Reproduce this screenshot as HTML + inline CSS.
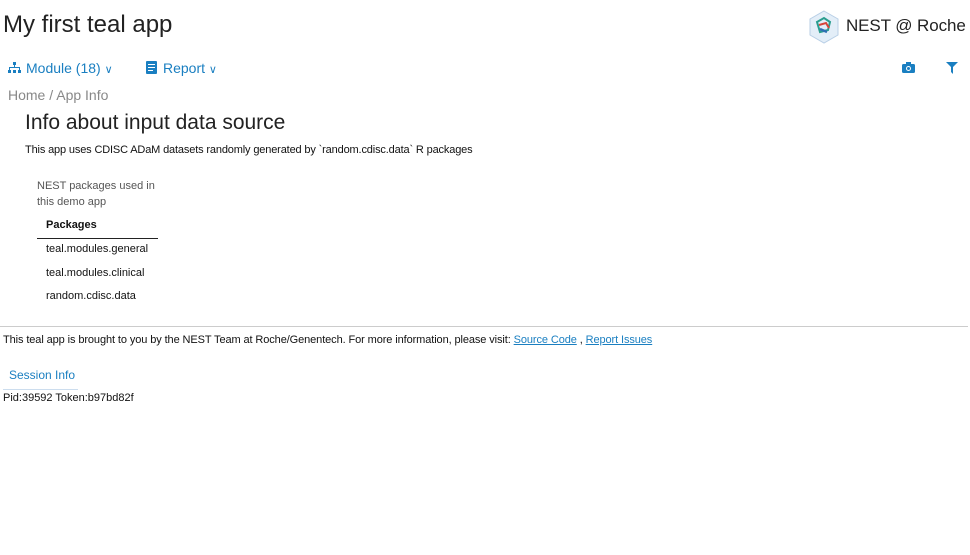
<!DOCTYPE html>
<html><head><meta charset="utf-8"><style>
body{margin:0;width:970px;height:555px;background:#fff;font-family:"Liberation Sans",sans-serif;color:#111;position:relative;overflow:hidden}
.a{position:absolute;white-space:nowrap}
.blue{color:#1a7fc1}
a{color:#1a7fc1;text-decoration:underline}
</style></head><body>
<div class="a" style="left:3px;top:11px;font-size:24px;color:#222">My first teal app</div>
<svg class="a" style="left:808px;top:10px" width="32" height="34" viewBox="0 0 32 34"><polygon points="16,1 30,9 30,25 16,33 2,25 2,9" fill="#e3eef8" stroke="#b8cfe6"/><path d="M9 12 L16 8 L22 12 L20 20 L12 22 Z" fill="none" stroke="#2a9d8f" stroke-width="2"/><path d="M11 15 L18 13 L21 18" stroke="#d6453a" stroke-width="2" fill="none"/><path d="M12 19 L19 22" stroke="#2f6fb3" stroke-width="2.5"/></svg>
<div class="a" style="left:846px;top:16px;font-size:17px;color:#222;letter-spacing:-0.1px">NEST @ Roche</div>
<svg class="a" style="left:8px;top:62px" width="13" height="12" viewBox="0 0 13 12" fill="#1a7fc1"><rect x="5" y="0" width="3" height="3"/><rect x="6" y="3" width="1" height="3"/><rect x="1" y="5" width="11" height="1"/><rect x="1" y="5" width="1" height="3"/><rect x="11" y="5" width="1" height="3"/><rect x="0" y="8" width="3" height="3"/><rect x="5" y="8" width="3" height="3"/><rect x="10" y="8" width="3" height="3"/></svg>
<div class="a blue" style="left:26px;top:60px;font-size:14px">Module (18) <span style="font-size:11px">&#8744;</span></div>
<svg class="a" style="left:146px;top:61px" width="11" height="13" viewBox="0 0 11 13"><rect width="11" height="13" rx="1" fill="#1a7fc1"/><rect x="2" y="3" width="7" height="1" fill="#fff"/><rect x="2" y="6" width="7" height="1" fill="#fff"/><rect x="2" y="9" width="5" height="1" fill="#fff"/></svg>
<div class="a blue" style="left:163px;top:60px;font-size:14px">Report <span style="font-size:11px">&#8744;</span></div>
<svg class="a" style="left:902px;top:62px" width="13" height="11" viewBox="0 0 13 11"><rect x="0" y="2" width="13" height="9" rx="1.5" fill="#1a7fc1"/><rect x="4" y="0" width="5" height="3" fill="#1a7fc1"/><circle cx="6.5" cy="6.5" r="2.5" fill="#fff"/><circle cx="6.5" cy="6.5" r="1.5" fill="#1a7fc1"/></svg>
<svg class="a" style="left:946px;top:62px" width="12" height="12" viewBox="0 0 12 12"><path d="M0 0H12L7 5V12L5 10V5Z" fill="#1a7fc1"/></svg>
<div class="a" style="left:8px;top:87px;font-size:14px;color:#888">Home / App Info</div>
<div class="a" style="left:25px;top:111px;font-size:21px;color:#222">Info about input data source</div>
<div class="a" style="left:25px;top:144px;font-size:11px;letter-spacing:-0.15px">This app uses CDISC ADaM datasets randomly generated by `random.cdisc.data` R packages</div>
<div class="a" style="left:37px;top:178px;font-size:11px;color:#555;line-height:16px">NEST packages used in<br>this demo app</div>
<div class="a" style="left:46px;top:219px;font-size:11px;font-weight:bold">Packages</div>
<div class="a" style="left:37px;top:238px;width:121px;height:1px;background:#222"></div>
<div class="a" style="left:46px;top:243px;font-size:11px">teal.modules.general</div>
<div class="a" style="left:46px;top:267px;font-size:11px">teal.modules.clinical</div>
<div class="a" style="left:46px;top:290px;font-size:11px">random.cdisc.data</div>
<div class="a" style="left:0;top:326px;width:968px;height:1px;background:#ccc"></div>
<div class="a" style="left:3px;top:334px;font-size:11px;letter-spacing:-0.1px">This teal app is brought to you by the NEST Team at Roche/Genentech. For more information, please visit: <a>Source Code</a> , <a>Report Issues</a></div>
<div class="a blue" style="left:9px;top:368px;font-size:12px">Session Info</div>
<div class="a" style="left:3px;top:389px;width:75px;height:1px;background:#cde"></div>
<div class="a" style="left:3px;top:392px;font-size:11px">Pid:39592 Token:b97bd82f</div>
</body></html>
